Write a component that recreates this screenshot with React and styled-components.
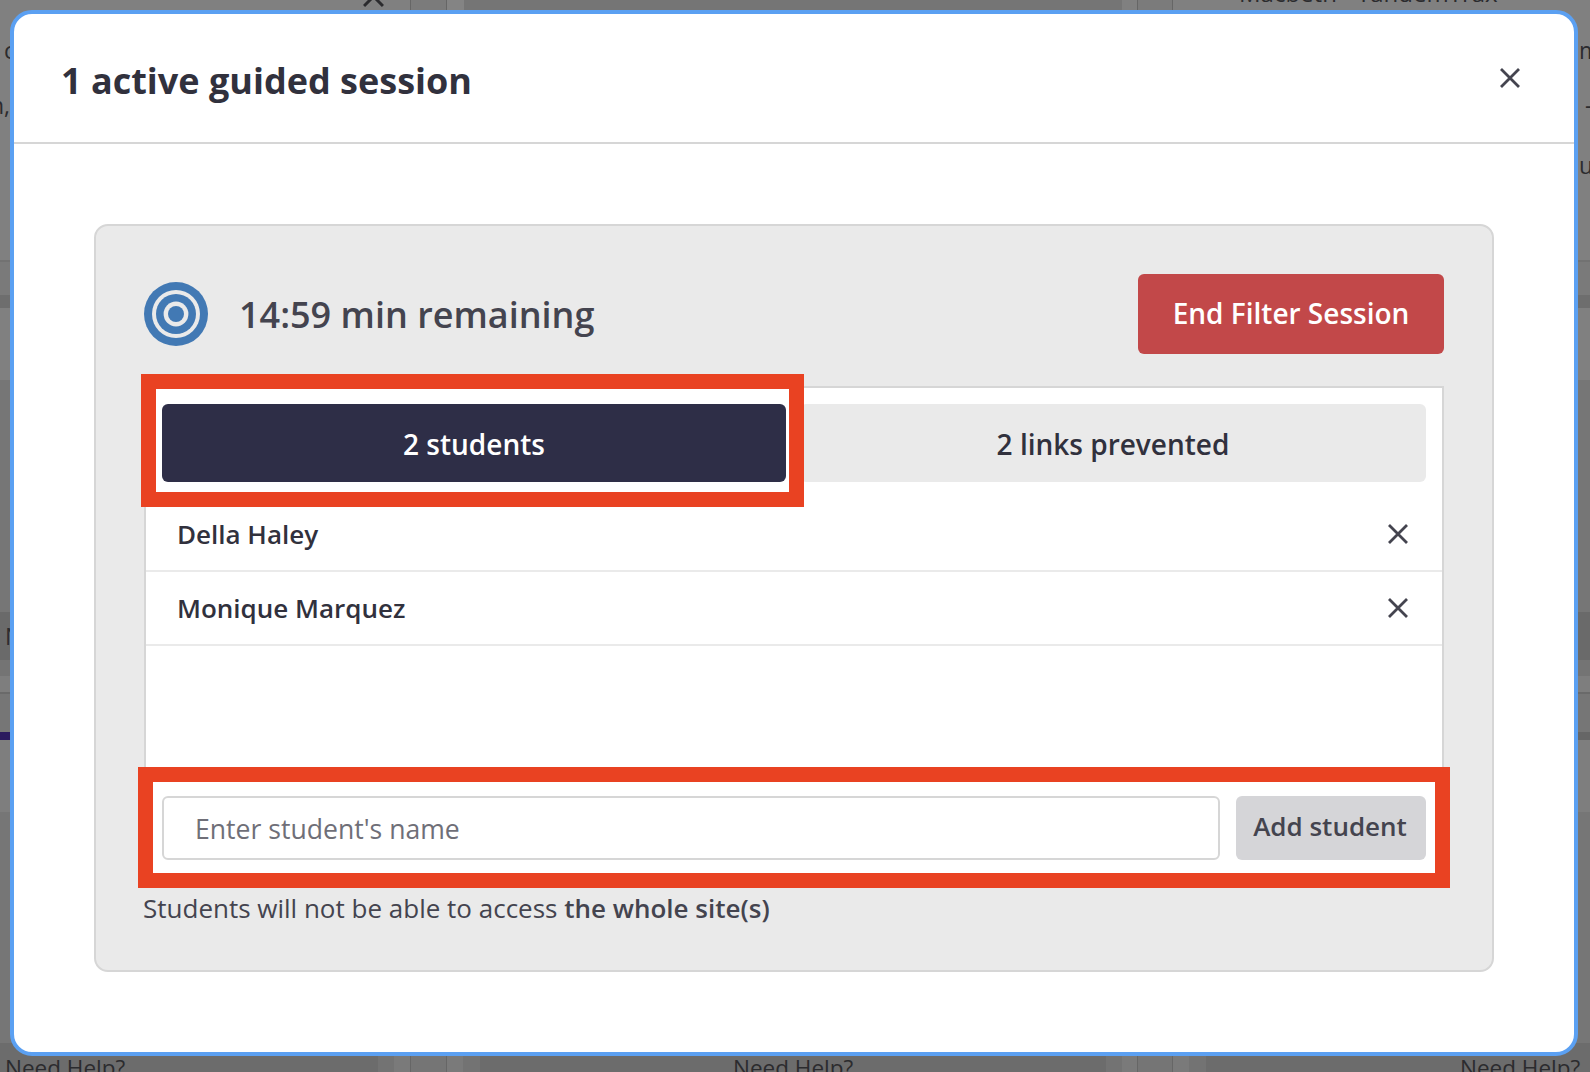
import React from 'react';
import styled, { createGlobalStyle } from 'styled-components';

const GlobalStyle = createGlobalStyle`
    * {
        box-sizing: border-box;
    }
    html, body {
        margin: 0;
        padding: 0;
        background: #767676;
        font-family: "Open Sans", "Noto Sans", sans-serif;
    }
`;

const Page = styled.div`
    position: relative;
    width: 1590px;
    height: 1072px;
    overflow: hidden;
`;

/* dimmed page behind the modal */
const Backdrop = styled.div`
    display: flex;
    flex-direction: column;
    height: 100%;
`;

const Strip = styled.div`
    display: flex;
    height: ${props => props.height}px;
    overflow: hidden;
    flex-shrink: 0;
`;

const Cell = styled.div`
    display: flex;
    flex: ${props => props.width ? `0 0 ${props.width}px` : "1"};
    align-items: ${props => props.align || "flex-start"};
    background: ${props => props.color};
    padding-left: ${props => props.indent || 0}px;
    border-right: ${props => props.line ? "1px solid #666" : "none"};
`;

const Band = styled.div`
    display: flex;
    justify-content: space-between;
    align-items: center;
    height: ${props => props.height}px;
    background: ${props => props.color};
    flex-shrink: 0;
`;

const Gutter = styled.div`
    display: flex;
    align-self: stretch;
    align-items: center;
    justify-content: ${props => props.end ? "flex-end" : "flex-start"};
    width: ${props => props.width}px;
    overflow: hidden;
    background: ${props => props.color || "transparent"};
    padding-left: ${props => props.indent || 0}px;
    font-size: 23px;
    line-height: 24px;
    white-space: nowrap;
    color: #2b2b2e;
`;

const BehindText = styled.span`
    font-size: ${props => props.size || 22.5}px;
    line-height: 20px;
    white-space: nowrap;
    color: #2b2b2e;
    margin-top: ${props => props.top || 0}px;
    margin-bottom: ${props => props.bottom || 0}px;
`;

const Modal = styled.div`
    position: absolute;
    top: 10px;
    left: 10px;
    width: 1568px;
    height: 1046px;
    display: flex;
    flex-direction: column;
    background: #fff;
    border: 4px solid #5ba0f2;
    border-radius: 22px;
`;

const ModalHeader = styled.div`
    display: flex;
    align-items: center;
    justify-content: space-between;
    flex: 0 0 130px;
    padding: 0 54px 0 48px;
    border-bottom: 2px solid #d6d6d6;
`;

const Title = styled.h2`
    margin: 4px 0 0 -1px;
    font-size: 36px;
    font-weight: 700;
    color: #31313d;
`;

const CloseButton = styled.button`
    display: flex;
    padding: 0;
    border: none;
    background: none;
    color: #44444f;
`;

const ModalBody = styled.div`
    flex: 1;
    display: flex;
    padding: 80px;
`;

const Panel = styled.div`
    flex: 1;
    display: flex;
    flex-direction: column;
    padding: 48px 48px 44px;
    background: #eaeaea;
    border: 2px solid #d6d6d6;
    border-radius: 14px;
`;

const SessionBar = styled.div`
    display: flex;
    align-items: center;
    justify-content: space-between;
    margin-bottom: 32px;
`;

const Timer = styled.div`
    display: flex;
    align-items: center;
    gap: 31px;
    font-size: 36px;
    font-weight: 600;
    color: #44444f;
`;

const EndButton = styled.button`
    width: 306px;
    height: 80px;
    padding: 0 0 2px;
    border: none;
    border-radius: 6px;
    background: #c24849;
    color: #fff;
    font-family: inherit;
    font-size: 28px;
    font-weight: 600;
`;

const ListBox = styled.div`
    flex: 1;
    display: flex;
    flex-direction: column;
    background: #fff;
    border: 2px solid #d6d6d6;
`;

const Tabs = styled.div`
    display: flex;
    gap: 14px;
    padding: 16px 16px;
`;

const Tab = styled.div`
    position: relative;
    flex: ${props => props.active ? "0 0 624px" : "1"};
    display: flex;
    align-items: center;
    justify-content: center;
    height: 78px;
    padding-top: 2px;
    border-radius: 6px;
    background: ${props => props.active ? "#2e2e47" : "#eaeaea"};
    color: ${props => props.active ? "#fff" : "#31313d"};
    font-size: 28px;
    font-weight: 600;
`;

/* red annotation frame laid over the screenshot */
const Highlight = styled.div`
    position: absolute;
    top: ${props => props.top}px;
    right: ${props => props.right}px;
    bottom: ${props => props.bottom}px;
    left: ${props => props.left}px;
    border: 15px solid #e94222;
    pointer-events: none;
    z-index: 1;
`;

const StudentRow = styled.div`
    display: flex;
    align-items: center;
    justify-content: space-between;
    height: 74px;
    padding: 0 34px 0 31px;
    border-bottom: 2px solid #eaeaea;
    font-size: 26px;
    font-weight: 600;
    color: #31313d;
`;

const RemoveButton = styled(CloseButton)``;

const Spacer = styled.div`
    flex: 1;
`;

const AddRow = styled.div`
    position: relative;
    display: flex;
    gap: 16px;
    height: 64px;
    margin: 0 16px 16px;
`;

const NameInput = styled.input`
    flex: 1;
    padding: 2px 32px 0 31px;
    background: #fff;
    border: 2px solid #d6d6d6;
    border-radius: 6px;
    font-family: inherit;
    font-size: 26.6px;
    color: #31313d;
    outline: none;

    &::placeholder {
        color: #6f6f78;
        opacity: 1;
    }
`;

const AddButton = styled.button`
    flex: 0 0 190px;
    padding: 0 2px 4px 0;
    border: none;
    border-radius: 6px;
    background: #d5d5d8;
    color: #44444f;
    font-family: inherit;
    font-size: 26px;
    font-weight: 600;
`;

const Note = styled.p`
    margin: 12px 0 0 -1px;
    font-size: 26px;
    line-height: 36px;
    color: #44444f;

    b {
        font-weight: 600;
    }
`;

const CrossIcon = ({ size = 20, color = "#44444f" }) => (
    <svg width={size} height={size} viewBox="0 0 20 20" fill="none">
        <path d="M1 1L19 19M19 1L1 19" stroke={color} strokeWidth="2.8" />
    </svg>
);

const TargetIcon = () => (
    <svg width="64" height="64" viewBox="0 0 64 64">
        <circle cx="32" cy="32" r="32" fill="#4279b4" />
        <circle cx="32" cy="32" r="24" fill="#eaeaea" />
        <circle cx="32" cy="32" r="20" fill="#4279b4" />
        <circle cx="32" cy="32" r="12.4" fill="#eaeaea" />
        <circle cx="32" cy="32" r="8" fill="#4279b4" />
    </svg>
);

const students = ["Della Haley", "Monique Marquez"];

const App = () => {
    return <Page>
        <GlobalStyle />
        <Backdrop>
            <Strip height={10}>
                <Cell width={363} color="#808080" />
                <Cell width={48} color="#808080" line>
                    <span style={{ marginTop: -14 }}><CrossIcon size={21} color="#2b2b2e" /></span>
                </Cell>
                <Cell width={36} color="#7b7b7b" line />
                <Cell width={17} color="#848484" />
                <Cell color="#757575" />
                <Cell width={16} color="#808080" line />
                <Cell width={35} color="#7b7b7b" line />
                <Cell width={417} color="#808080" align="flex-end" indent={66}>
                    <BehindText size={24} bottom={7}>Macbeth - TandemTrax</BehindText>
                </Cell>
            </Strip>
            <Band height={80} color="#808080">
                <Gutter width={10} indent={4}>c</Gutter>
                <Gutter width={12} indent={1}>m</Gutter>
            </Band>
            <Band height={30} color="#808080">
                <Gutter width={10} end>n,</Gutter>
                <Gutter width={12} indent={7}>-</Gutter>
            </Band>
            <Band height={90} color="#808080">
                <Gutter width={10} />
                <Gutter width={12} indent={1}>ue</Gutter>
            </Band>
            <Band height={50} color="#808080" />
            <Band height={2} color="#727272" />
            <Band height={33} color="#7a7a7a" />
            <Band height={13} color="#6e6e6e" />
            <Band height={72} color="#808080" />
            <Band height={232} color="#767676" />
            <Band height={48} color="#6a6a6a">
                <Gutter width={10} indent={5}>N</Gutter>
            </Band>
            <Band height={16} color="#747474" />
            <Band height={16} color="#7e7e7e" />
            <Band height={2} color="#6a6a6a" />
            <Band height={38} color="#767676" />
            <Band height={8} color="#767676">
                <Gutter width={10} color="#2b1a5e" />
                <Gutter width={12} color="#666666" />
            </Band>
            <Band height={72} color="#7e7e7e" />
            <Band height={231} color="#767676" />
            <Band height={13} color="#6c6c6c" />
            <Strip height={16}>
                <Cell width={378} color="#6c6c6c" indent={5}>
                    <BehindText top={2}>Need Help?</BehindText>
                </Cell>
                <Cell width={16} color="#737373" />
                <Cell width={17} color="#7a7a7a" line />
                <Cell width={36} color="#757575" line />
                <Cell width={16} color="#7a7a7a" />
                <Cell width={17} color="#737373" />
                <Cell width={626} color="#6c6c6c" indent={253}>
                    <BehindText top={2}>Need Help?</BehindText>
                </Cell>
                <Cell width={16} color="#737373" />
                <Cell width={16} color="#7a7a7a" line />
                <Cell width={35} color="#757575" line />
                <Cell width={16} color="#7a7a7a" />
                <Cell width={17} color="#737373" />
                <Cell color="#6c6c6c" indent={254}>
                    <BehindText top={2}>Need Help?</BehindText>
                </Cell>
            </Strip>
        </Backdrop>
        <Modal>
            <ModalHeader>
                <Title>1 active guided session</Title>
                <CloseButton><CrossIcon /></CloseButton>
            </ModalHeader>
            <ModalBody>
                <Panel>
                    <SessionBar>
                        <Timer>
                            <TargetIcon />
                            14:59 min remaining
                        </Timer>
                        <EndButton>End Filter Session</EndButton>
                    </SessionBar>
                    <ListBox>
                        <Tabs>
                            <Tab active>
                                2 students
                                <Highlight top={-30} right={-18} bottom={-25} left={-21} />
                            </Tab>
                            <Tab>2 links prevented</Tab>
                        </Tabs>
                        {students.map(name => (
                            <StudentRow key={name}>
                                {name}
                                <RemoveButton><CrossIcon /></RemoveButton>
                            </StudentRow>
                        ))}
                        <Spacer />
                        <AddRow>
                            <NameInput placeholder="Enter student's name" />
                            <AddButton>Add student</AddButton>
                            <Highlight top={-29} right={-24} bottom={-28} left={-24} />
                        </AddRow>
                    </ListBox>
                    <Note>Students will not be able to access <b>the whole site(s)</b></Note>
                </Panel>
            </ModalBody>
        </Modal>
    </Page>
}

export default App;
